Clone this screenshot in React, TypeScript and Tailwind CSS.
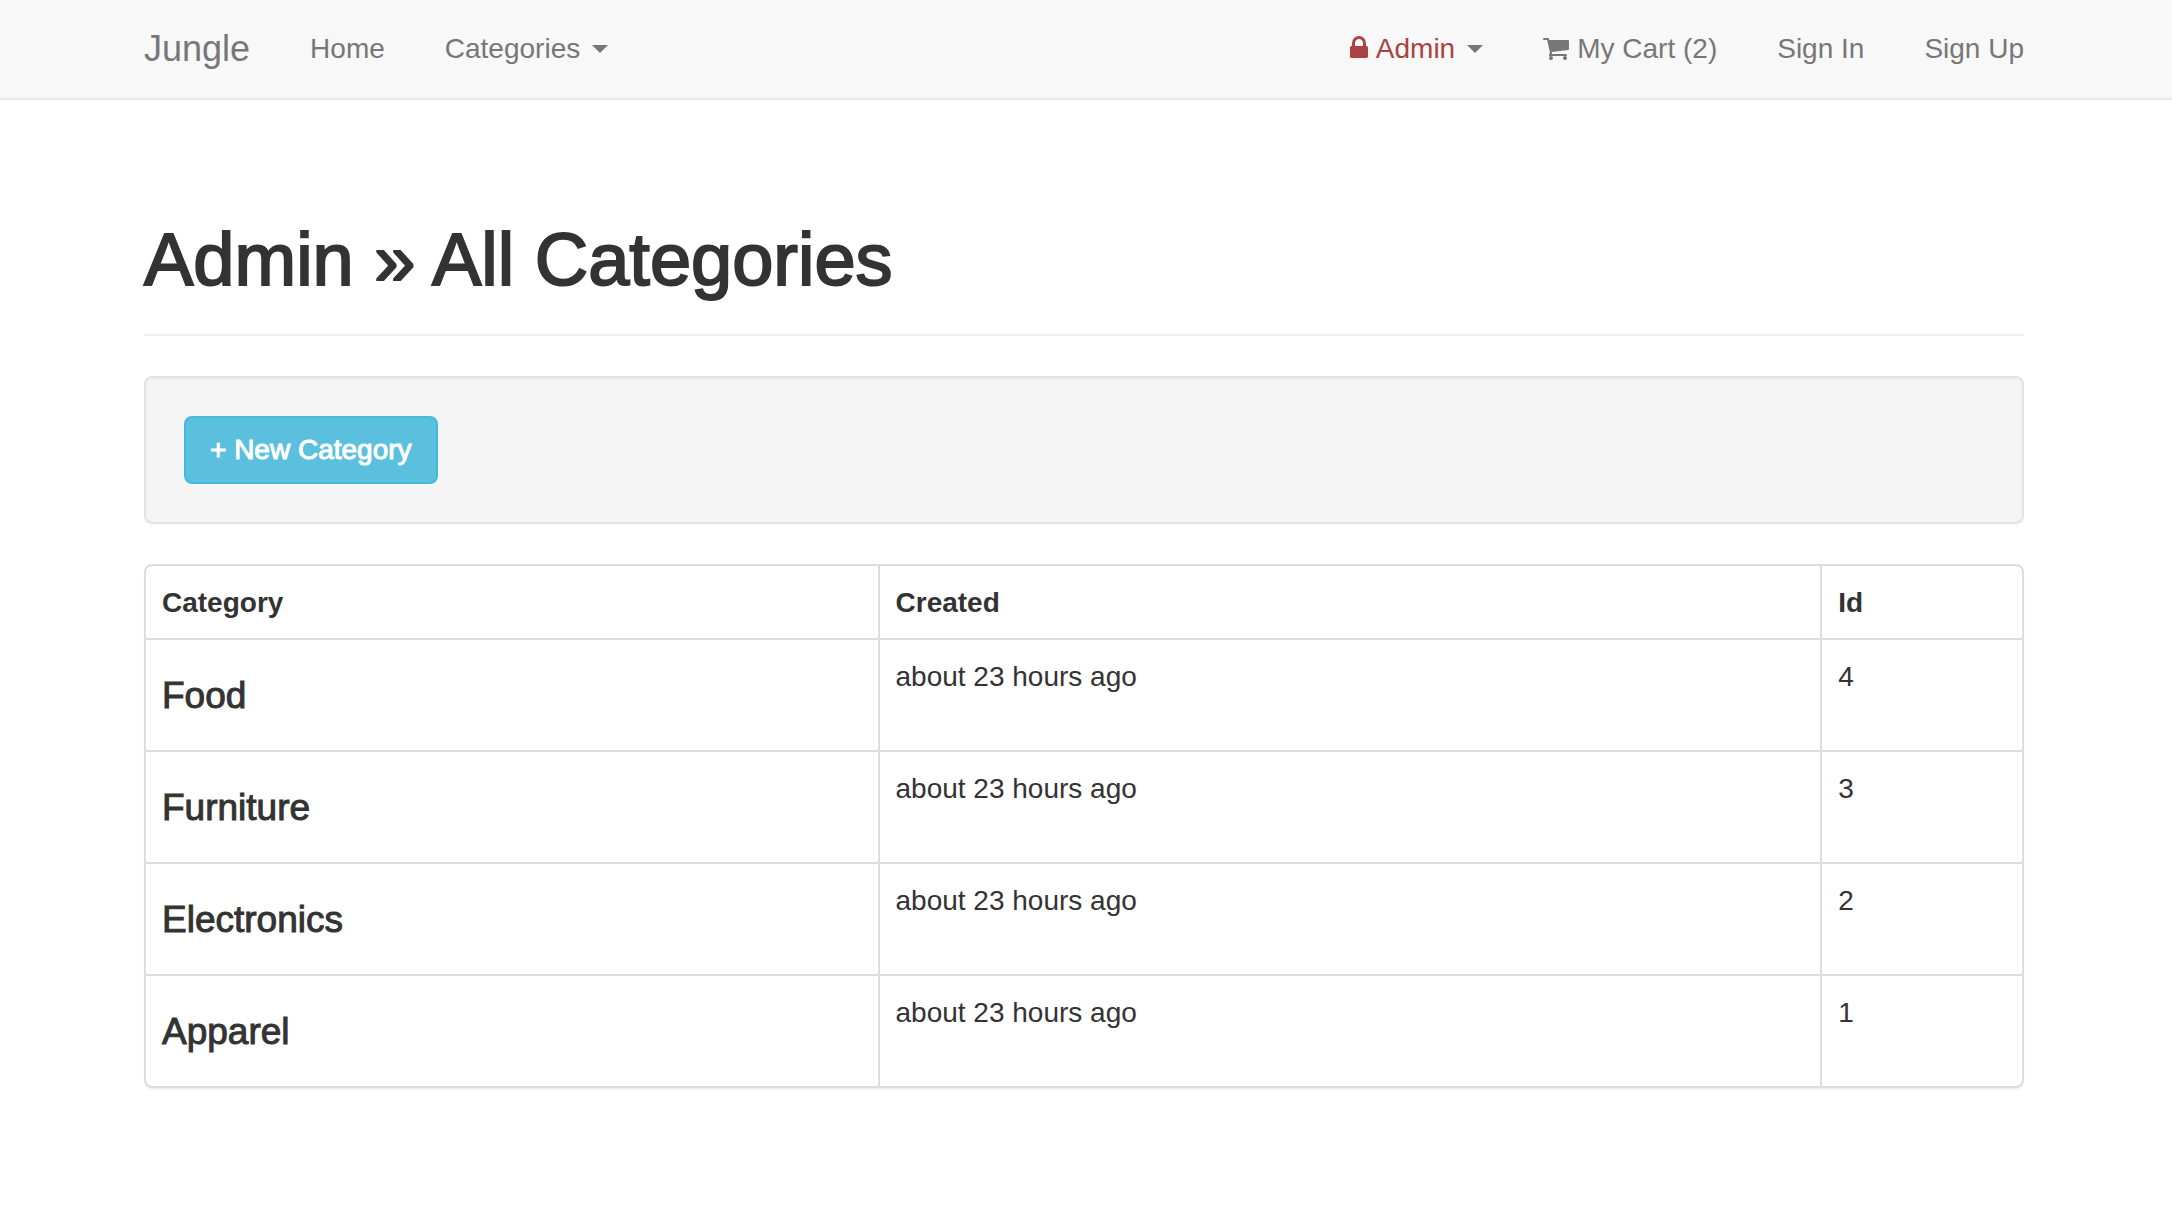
import React from "react";

type Category = { id: number; name: string; created: string };

const categories: Category[] = [
  { id: 4, name: "Food", created: "about 23 hours ago" },
  { id: 3, name: "Furniture", created: "about 23 hours ago" },
  { id: 2, name: "Electronics", created: "about 23 hours ago" },
  { id: 1, name: "Apparel", created: "about 23 hours ago" },
];

function Container({ children }: { children: React.ReactNode }) {
  return (
    <div className="pr-1">
      <div className="mx-auto w-full max-w-[1940px] px-[30px]">{children}</div>
    </div>
  );
}

function Caret() {
  return (
    <svg className="ml-3 h-2 w-4 shrink-0" viewBox="0 0 16 8" fill="#777777" aria-hidden="true">
      <path d="M0 0h16L8 8z" />
    </svg>
  );
}

function LockIcon() {
  return (
    <svg className="mr-2 mb-0.5 h-7 w-[18px] shrink-0" viewBox="320 0 1152 1792" fill="currentColor" aria-hidden="true">
      <path d="M640 768h512v-192q0-106-75-181t-181-75-181 75-75 181v192zm832 96v576q0 40-28 68t-68 28h-960q-40 0-68-28t-28-68v-576q0-40 28-68t68-28h32v-192q0-184 132-316t316-132 316 132 132 316v192h32q40 0 68 28t28 68z" />
    </svg>
  );
}

function CartIcon() {
  return (
    <svg className="mr-2 mb-0.5 h-7 w-[26px] shrink-0" viewBox="64 0 1664 1792" fill="currentColor" aria-hidden="true">
      <path d="M704 1536q0 52-38 90t-90 38-90-38-38-90 38-90 90-38 90 38 38 90zm896 0q0 52-38 90t-90 38-90-38-38-90 38-90 90-38 90 38 38 90zm128-1088v512q0 24-16.5 42.5t-40.5 21.5l-1044 122q13 60 13 70 0 16-24 64h920q26 0 45 19t19 45-19 45-45 19h-1024q-26 0-45-19t-19-45q0-11 8-31.5t16-36 21.5-40 15.5-29.5l-177-823h-204q-26 0-45-19t-19-45 19-45 45-19h256q16 0 28.5 6.5t19.5 15.5 13 24.5 8 26 5.5 29.5 4.5 26h1201q26 0 45 19t19 45z" />
    </svg>
  );
}

function Navbar() {
  return (
    <nav className="border-b-2 border-[#e7e7e7] bg-[#f8f8f8] text-[#777777]">
      <Container>
        <div className="flex h-[98px] items-center justify-between whitespace-nowrap">
          <div className="flex items-center gap-[60px]">
            <a href="#" className="text-[36px] leading-10">Jungle</a>
            <a href="#">Home</a>
            <button type="button" className="flex items-center">
              Categories
              <Caret />
            </button>
          </div>
          <div className="flex items-center gap-[60px]">
            <button type="button" className="flex items-center text-[#a94442]">
              <LockIcon />
              Admin
              <Caret />
            </button>
            <a href="#" className="flex items-center">
              <CartIcon />
              My Cart (2)
            </a>
            <a href="#">Sign In</a>
            <a href="#">Sign Up</a>
          </div>
        </div>
      </Container>
    </nav>
  );
}

function CategoryTable() {
  return (
    <div className="overflow-hidden rounded-lg border-2 border-[#dddddd] bg-white shadow-[0_2px_2px_rgba(0,0,0,0.05)]">
      <table className="w-full table-fixed border-separate border-spacing-0 text-left">
        <colgroup>
          <col className="w-[39.1%]" />
          <col className="w-[50.25%]" />
          <col />
        </colgroup>
        <thead>
          <tr>
            <th scope="col" className="border-r-2 border-b-2 border-[#dddddd] px-4 pt-[17px] pb-[15px] font-bold">Category</th>
            <th scope="col" className="border-r-2 border-b-2 border-[#dddddd] px-4 pt-[17px] pb-[15px] font-bold">Created</th>
            <th scope="col" className="border-b-2 border-[#dddddd] px-4 pt-[17px] pb-[15px] font-bold">Id</th>
          </tr>
        </thead>
        <tbody className="[&>tr:last-child>td]:border-b-0">
          {categories.map((c) => (
            <tr key={c.id} className="align-top">
              <td className="border-r-2 border-b-2 border-[#dddddd] px-4 pt-[17px] pb-[15px]">
                <h4 className="my-5 text-[37px] leading-[38px] [-webkit-text-stroke:1px_#333333]">{c.name}</h4>
              </td>
              <td className="border-r-2 border-b-2 border-[#dddddd] px-4 pt-[17px] pb-[15px]">{c.created}</td>
              <td className="border-b-2 border-[#dddddd] px-4 pt-[17px] pb-[15px]">{c.id}</td>
            </tr>
          ))}
        </tbody>
      </table>
    </div>
  );
}

export default function App() {
  return (
    <div className="min-h-screen bg-white font-['Liberation_Sans',Arial,sans-serif] text-[28px] leading-10 text-[#333333]">
      <Navbar />
      <Container>
        <main className="pt-[120px] pb-10">
          <header className="mb-10 border-b-2 border-[#eeeeee] pb-[34px]">
            <h1 className="text-[74px] leading-20 [-webkit-text-stroke:2px_#333333]">Admin » All Categories</h1>
          </header>
          <section className="mb-10 rounded-lg border-2 border-[#e3e3e3] bg-[#f5f5f5] p-[38px] shadow-[inset_0_1px_3px_rgba(0,0,0,0.05)]">
            <button
              type="button"
              className="block rounded-lg border-2 border-[#46b8da] bg-[#5bc0de] px-6 py-3 text-white [-webkit-text-stroke:1px_#ffffff]"
            >
              + New Category
            </button>
          </section>
          <CategoryTable />
        </main>
      </Container>
    </div>
  );
}
